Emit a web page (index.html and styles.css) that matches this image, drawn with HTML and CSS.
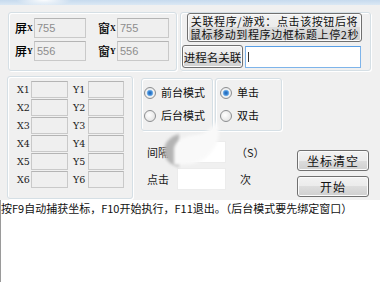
FILE: index.html
```html
<!DOCTYPE html>
<html lang="zh-CN">
<head>
  <meta charset="UTF-8" />
  <title>连点器</title>
  <link rel="stylesheet" href="styles.css">
</head>
<body>

  <div class="topbar"></div>

  <div class="wrap">
    <div class="row row-top">
      <div class="group coords">
        <span class="lbl">屏<i>X</i></span><div class="box off">755</div>
        <span class="lbl lbl-win">窗<i>X</i></span><div class="box off">755</div>
        <span class="lbl">屏<i>Y</i></span><div class="box off">556</div>
        <span class="lbl lbl-win">窗<i>Y</i></span><div class="box off">556</div>
      </div>

      <div class="group bind">
        <button class="btn btn-bind"><span>关联程序/游戏：点击该按钮后将</span><span>鼠标移动到程序边框标题上停2秒</span></button>
        <div class="bind-row">
          <button class="btn btn-proc">进程名关联</button>
          <div class="box focus"><span class="caret"></span></div>
        </div>
      </div>
    </div>

    <div class="row row-main">
      <div class="group points">
        <span class="pl">X1</span><div class="box off"></div><span class="pl">Y1</span><div class="box off"></div>
        <span class="pl">X2</span><div class="box off"></div><span class="pl">Y2</span><div class="box off"></div>
        <span class="pl">X3</span><div class="box off"></div><span class="pl">Y3</span><div class="box off"></div>
        <span class="pl">X4</span><div class="box off"></div><span class="pl">Y4</span><div class="box off"></div>
        <span class="pl">X5</span><div class="box off"></div><span class="pl">Y5</span><div class="box off"></div>
        <span class="pl">X6</span><div class="box off"></div><span class="pl">Y6</span><div class="box off"></div>
      </div>

      <div class="mid">
        <div class="radios">
          <div class="group rgroup rg-mode">
            <label class="radio on">前台模式</label>
            <label class="radio">后台模式</label>
          </div>
          <div class="group rgroup rg-click">
            <label class="radio on">单击</label>
            <label class="radio">双击</label>
          </div>
        </div>

        <div class="param">
          <span class="plabel">间隔</span><div class="box white"></div><span class="unit">（S）</span>
        </div>
        <div class="param">
          <span class="plabel">点击</span><div class="box white"></div><span class="unit unit-ci">次</span>
        </div>

        <!-- 拖动残影 -->
        <svg class="ghost" width="64" height="56" viewBox="0 0 64 56">
          <defs>
            <filter id="blur"><feGaussianBlur stdDeviation="1.4"/></filter>
          </defs>
          <path d="M2 33 C2 24 9 18 17 16 L17 49 C8 47 2 41 2 33 Z" fill="#b4b4b4" filter="url(#blur)"/>
          <path d="M12 30 C14 22 22 18 34 17 C44 16 50 10 54 3 C58 10 58 22 52 30 C46 40 38 44 30 46 L12 47 Z" fill="#f9f9f9" filter="url(#blur)"/>
        </svg>
      </div>

      <div class="actions">
        <button class="btn btn-act">坐标清空</button>
        <button class="btn btn-act">开始</button>
      </div>
    </div>
  </div>

  <div class="log">按F9自动捕获坐标，F10开始执行，F11退出。（后台模式要先绑定窗口）</div>

</body>
</html>
```

FILE: styles.css
```css
* { box-sizing: border-box; margin: 0; padding: 0; }

body {
  font-family: 'Noto Sans CJK SC', 'Liberation Sans', sans-serif;
  font-size: 11px;
  background-color: #f0f0f0;
  color: #1a1a1a;
  width: 380px;
  height: 282px;
  overflow: hidden;
}

/* 窗口标题栏的下沿 */
.topbar {
  height: 5px;
  background:
    radial-gradient(ellipse 28px 6px at 44px 0, rgba(255,255,255,0.95), rgba(255,255,255,0) 100%),
    linear-gradient(#c6daee, #dbe8f4);
}

.wrap {
  padding: 7px 0 0 7px;
}

.row {
  display: flex;
}

.row-main {
  margin-top: 5px;
  height: 123px;
}

.group {
  border: 1px solid #d5dfe5;
  border-radius: 3px;
  box-shadow: inset 1px 1px 0 #fff, 1px 1px 0 #fff;
}

.box {
  height: 20px;
  border: 1px solid #c9c9c9;
  border-top-color: #b4b4b4;
  background: #fff;
}

.box.off {
  background: #efefef;
  color: #8d8d8d;
  font-family: 'Liberation Sans', sans-serif;
  font-size: 11px;
  line-height: 18px;
  padding-left: 2px;
}

.box.white {
  border-color: #ececec;
  background: #fff;
}

.box.focus {
  border-color: #7eb4ea;
  border-top-color: #569de5;
  display: flex;
  align-items: center;
  padding-left: 2px;
}

.caret {
  width: 1px;
  height: 10px;
  background: #333;
}

/* 坐标显示 */
.coords {
  width: 169px;
  height: 59px;
  margin-left: 1px;
  padding: 5px 0 0 6px;
  display: grid;
  grid-template-columns: 19px 52px 31px 52px;
  grid-auto-rows: 20px;
  row-gap: 3px;
  align-items: center;
}

.lbl {
  font-size: 12px;
  line-height: 20px;
  font-weight: 500;
  color: #000;
  white-space: nowrap;
}

.lbl i {
  font-style: normal;
  font-family: 'Liberation Serif', serif;
  font-size: 8px;
  font-weight: bold;
  vertical-align: 2px;
}

.lbl-win {
  padding-left: 12px;
}

/* 绑定 */
.bind {
  width: 191px;
  height: 59px;
  margin-left: 3px;
  padding: 0 0 0 1px;
}

.btn {
  font-family: 'Noto Sans CJK SC', sans-serif;
  color: #111;
  border: 1px solid #707070;
  border-radius: 3px;
  background: linear-gradient(#f2f2f2 0%, #ebebeb 50%, #dddddd 50%, #cfcfcf 100%);
  box-shadow: inset 0 0 0 1px #fbfbfb;
}

.btn-bind {
  display: flex;
  flex-direction: column;
  align-items: center;
  justify-content: center;
  width: 175px;
  height: 29px;
  margin-left: 5px;
  font-size: 11px;
  letter-spacing: 0.6px;
}

.btn-bind span {
  display: block;
  height: 13px;
  line-height: 13px;
  white-space: nowrap;
}

.bind-row {
  display: flex;
  margin-top: 3px;
  gap: 2px;
}

.btn-proc {
  width: 61px;
  height: 23px;
  font-size: 11.5px;
}

.bind-row .box {
  width: 116px;
  height: 22px;
  margin-top: 1px;
}

/* 坐标点 */
.points {
  width: 126px;
  padding: 4px 0 0 9px;
  display: grid;
  grid-template-columns: 14px 37px 20px 36px;
  grid-auto-rows: 17px;
  row-gap: 1px;
  align-items: center;
}

.points .box {
  height: 17px;
}

.pl {
  font-family: 'DejaVu Serif', serif;
  font-size: 9.5px;
  color: #222;
}

.points .pl:nth-child(4n+3) {
  padding-left: 5px;
}

/* 中间区域 */
.mid {
  position: relative;
  width: 141px;
  margin-left: 8px;
  padding-top: 2px;
}

.radios {
  display: flex;
  gap: 2px;
}

.rgroup {
  height: 53px;
  padding: 5px 0 0 2px;
  display: flex;
  flex-direction: column;
  gap: 6px;
}

.rg-mode { width: 72px; }
.rg-click { width: 67px; padding-left: 4px; }

.radio {
  display: flex;
  align-items: center;
  gap: 5px;
  font-size: 11px;
  line-height: 17px;
  color: #111;
}

.radio::before {
  content: "";
  width: 10px;
  height: 10px;
  border-radius: 50%;
  border: 1px solid #8c8e90;
  background: radial-gradient(circle at 40% 40%, #fff, #dcdcdc);
}

.radio.on::before {
  background: radial-gradient(circle at 50% 50%, #1d62b0 0, #3f8ad8 2px, #9ccaf0 3.2px, #f4f4f4 3.6px, #d8d8d8 100%);
}

.param {
  display: flex;
  align-items: center;
  height: 22px;
  padding-left: 6px;
  margin-top: 10px;
}

.param + .param {
  margin-top: 5px;
}

.plabel {
  width: 30px;
  font-size: 11px;
}

.param .box {
  width: 49px;
  height: 22px;
}

.unit {
  margin-left: 10px;
  font-size: 11px;
}

.unit-ci {
  margin-left: 14px;
}

.ghost {
  position: absolute;
  left: 21px;
  top: 42px;
}

/* 右侧按钮 */
.actions {
  margin-left: 15px;
  padding-top: 74px;
  display: flex;
  flex-direction: column;
  gap: 5px;
}

.btn-act {
  width: 72px;
  height: 21px;
  font-size: 12px;
  letter-spacing: 1px;
}

/* 提示输出 */
.log {
  margin-top: 1px;
  height: 83px;
  background: #fff;
  border-left: 1px solid #9a9a9a;
  font-size: 11px;
  line-height: 14px;
  padding-top: 1px;
  color: #111;
  white-space: nowrap;
  overflow: hidden;
}
```
